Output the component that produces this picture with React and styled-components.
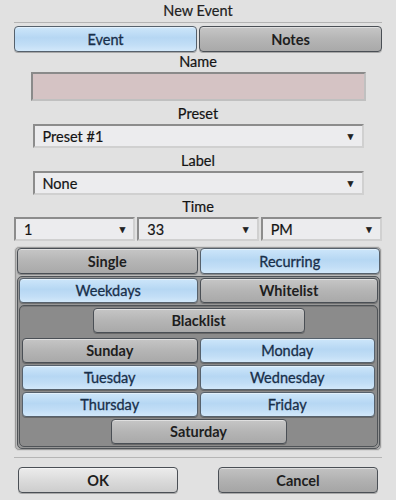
import React, { useState } from 'react'
import styled, { createGlobalStyle, css } from 'styled-components'

const Global = createGlobalStyle`
  html, body {
    margin: 0;
    padding: 0;
    background: #e1e1e1;
  }
  body {
    font-family: Lato, "Noto Sans", sans-serif;
    font-size: 14.5px;
    color: #1c1c1c;
  }
`

const Dialog = styled.div`
  width: 396px;
  height: 500px;
  box-sizing: border-box;
  padding: 0 14px;
  display: flex;
  flex-direction: column;
`

const Title = styled.div`
  height: 22px;
  line-height: 22px;
  text-align: center;
  border-bottom: 1px solid #b3b3b3;
  color: #222;
  -webkit-text-stroke: 0.2px #222;
`

const Row = styled.div`
  display: flex;
  gap: 2px;
  justify-content: ${p => p.$center ? 'center' : 'stretch'};
  margin-top: ${p => p.$mt || 0}px;
`

const Button = styled.div`
  flex: ${p => p.$w ? `0 0 ${p.$w}px` : 1};
  height: ${p => p.$h || 26}px;
  box-sizing: border-box;
  display: flex;
  align-items: center;
  justify-content: center;
  border-radius: 4px;
  border: 1px solid #4a4f55;
  box-shadow: 0 1px 0 rgba(0, 0, 0, 0.25), inset 0 1px 0 rgba(255, 255, 255, 0.45);
  cursor: pointer;
  ${p => p.$active
    ? css`
        background: linear-gradient(#cde6fa, #b6d7f3 45%, #c2def6 75%, #d2e8fa);
        color: #182f4a;
        font-weight: 400;
        -webkit-text-stroke: 0.3px #182f4a;
        border-color: #56616c;
      `
    : css`
        background: linear-gradient(#c6c6c6, #b5b5b5 50%, #a9a9a9);
        color: #1e1e1e;
        font-weight: 700;
      `}
`

const FootButton = styled(Button)`
  flex: 0 0 160px;
  ${p => p.$light
    ? css`background: linear-gradient(#ececec, #dadada 55%, #cdcdcd);`
    : css`background: linear-gradient(#c2c2c2, #b0b0b0 55%, #a5a5a5);`}
`

const Label = styled.div`
  text-align: center;
  line-height: 18px;
  margin-top: ${p => p.$mt || 4}px;
  margin-bottom: 1px;
  color: #141414;
  -webkit-text-stroke: 0.2px #141414;
`

const NameInput = styled.div`
  width: 335px;
  height: 29px;
  align-self: center;
  box-sizing: border-box;
  background: #d5c3c4;
  border: 2px solid #c0c0c0;
  border-top-color: #8a8a8a;
  border-left-color: #8a8a8a;
`

const Select = styled.div`
  ${p => p.$w ? css`width: ${p.$w}px; align-self: center;` : css`flex: 1;`}
  height: 24px;
  box-sizing: border-box;
  display: flex;
  align-items: center;
  justify-content: space-between;
  padding: 0 6px 0 8px;
  background: #ececee;
  border: 2px solid #d0d0d0;
  border-top-color: #8c8c8c;
  border-left-color: #8c8c8c;
  color: #141414;
  -webkit-text-stroke: 0.2px #141414;

  &::after {
    content: "▼";
    font-size: 10px;
    color: #222;
  }
`

const Frame = styled.div`
  display: flex;
  flex-direction: column;
  gap: ${p => p.$gap || 2}px;
  border-radius: 5px;
  box-sizing: border-box;
  ${p => p.$level === 0 && css`
    margin-top: 5px;
    padding: 1px 1px 1px 2px;
    background: #b9b9b9;
    border: 1px solid #d4d4d4;
    box-shadow: inset 0 0 0 1px #9a9a9a;
  `}
  ${p => p.$level === 1 && css`
    padding: 1px;
    background: #979797;
    border: 1px solid #505458;
  `}
  ${p => p.$level === 2 && css`
    padding: 2px 2px 2px 2px;
    background: #8b8b8b;
    border: 1px solid #4f5357;
    box-shadow: inset 0 1px 0 rgba(0, 0, 0, 0.15);
  `}
`

const Rule = styled.div`
  margin-top: 6px;
  border-top: 1px solid #b5b5b5;
`

const Footer = styled.div`
  display: flex;
  justify-content: space-between;
  padding: 0 4px;
  margin-top: 9px;
`

const days = [
  ['Sunday', false], ['Monday', true],
  ['Tuesday', true], ['Wednesday', true],
  ['Thursday', true], ['Friday', true],
]

export default function App() {
  const [tab, setTab] = useState('event')
  const [mode, setMode] = useState('recurring')
  const [list, setList] = useState('weekdays')

  return (
    <Dialog>
      <Global />
      <Title>New Event</Title>
      <Row $mt={3}>
        <Button $active={tab === 'event'} onClick={() => setTab('event')}>Event</Button>
        <Button $active={tab === 'notes'} onClick={() => setTab('notes')}>Notes</Button>
      </Row>

      <Label $mt={1}>Name</Label>
      <NameInput />

      <Label>Preset</Label>
      <Select $w={331}>Preset #1</Select>

      <Label>Label</Label>
      <Select $w={331}>None</Select>

      <Label $mt={3}>Time</Label>
      <Row>
        <Select>1</Select>
        <Select>33</Select>
        <Select>PM</Select>
      </Row>

      <Frame $level={0}>
        <Row>
          <Button $active={mode === 'single'} onClick={() => setMode('single')}>Single</Button>
          <Button $active={mode === 'recurring'} onClick={() => setMode('recurring')}>Recurring</Button>
        </Row>
        <Frame $level={1}>
          <Row>
            <Button $h={25} $active={list === 'weekdays'} onClick={() => setList('weekdays')}>Weekdays</Button>
            <Button $h={25} $active={list === 'whitelist'} onClick={() => setList('whitelist')}>Whitelist</Button>
          </Row>
          <Frame $level={2}>
            <Row $center>
              <Button $h={25} $w={212}>Blacklist</Button>
            </Row>
            <Row $mt={3}>
              <Button $h={25} $active={days[0][1]}>{days[0][0]}</Button>
              <Button $h={25} $active={days[1][1]}>{days[1][0]}</Button>
            </Row>
            <Row>
              <Button $h={25} $active={days[2][1]}>{days[2][0]}</Button>
              <Button $h={25} $active={days[3][1]}>{days[3][0]}</Button>
            </Row>
            <Row>
              <Button $h={25} $active={days[4][1]}>{days[4][0]}</Button>
              <Button $h={25} $active={days[5][1]}>{days[5][0]}</Button>
            </Row>
            <Row $center>
              <Button $h={25} $w={176}>Saturday</Button>
            </Row>
          </Frame>
        </Frame>
      </Frame>

      <Rule />
      <Footer>
        <FootButton $light>OK</FootButton>
        <FootButton>Cancel</FootButton>
      </Footer>
    </Dialog>
  )
}
